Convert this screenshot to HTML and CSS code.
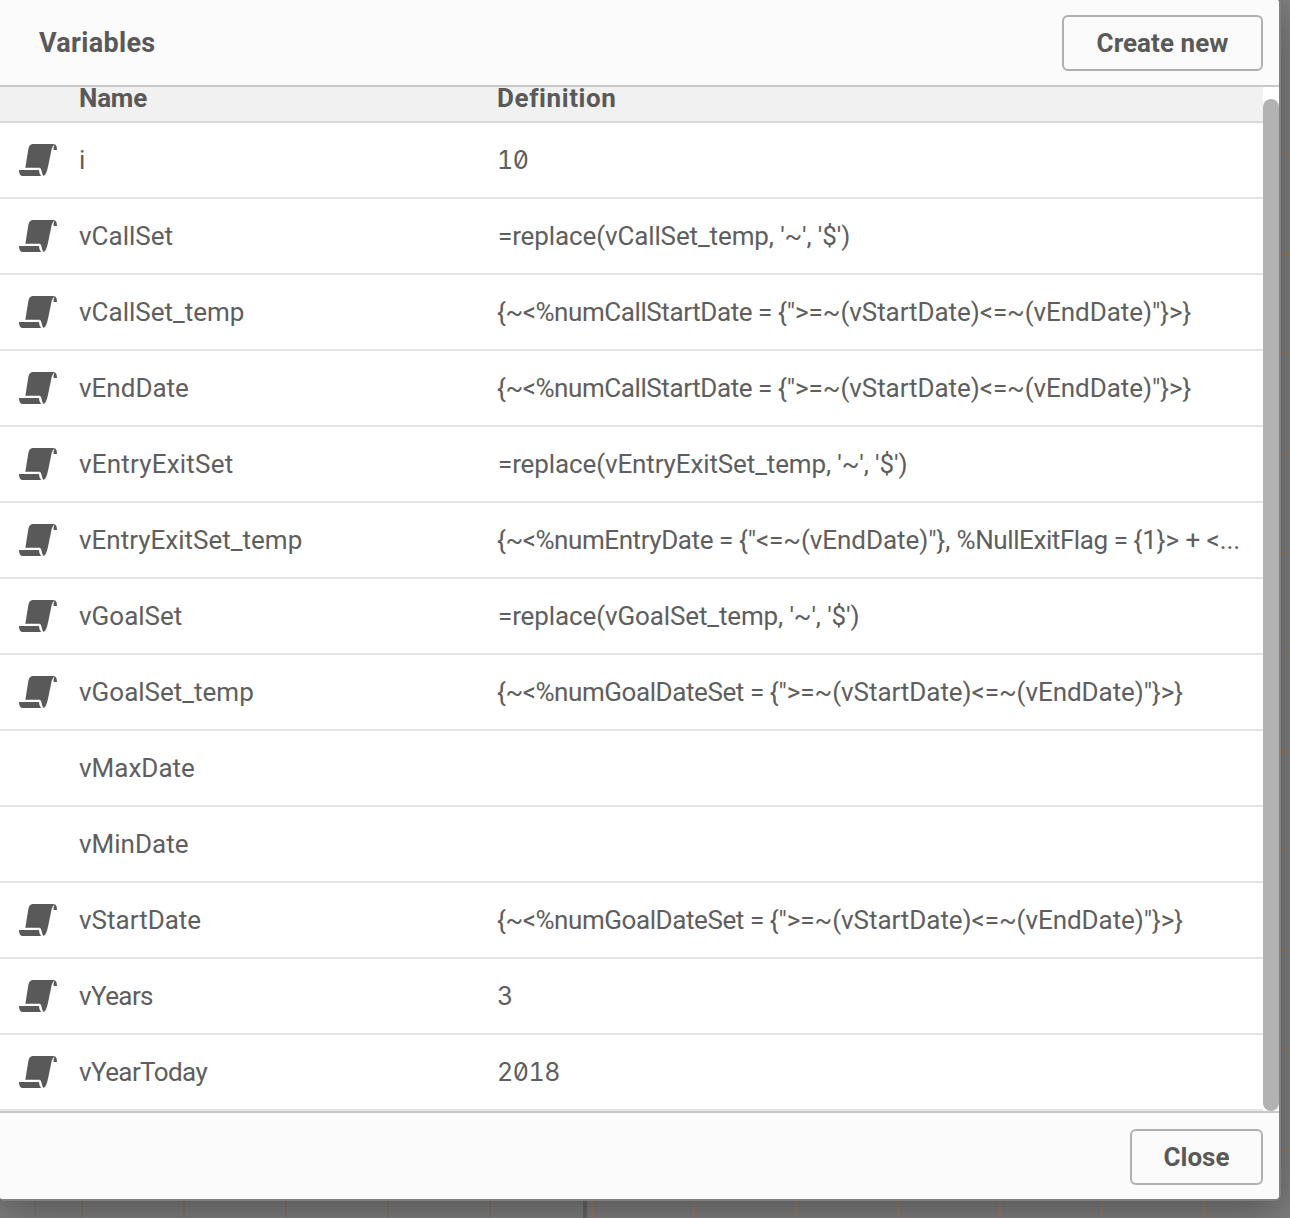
FILE: index.html
```
<!DOCTYPE html>
<html lang="en">
<head>
<meta charset="utf-8">
<title>Variables</title>
<link rel="stylesheet" href="styles.css">
</head>
<body>
<svg class="defs" aria-hidden="true"><symbol id="script" viewBox="0 0 114 96"><path d="M40 0C32 2 29 8 28 16L19 71H62C69 73 67 88 74 96C85 92 88 60 95 30C98 12 101 5 107 2L103 0Z"/><path d="M104 0C111 -1 114 8 114 18H104C103 10 105 6 107 2Z"/><path d="M0 78H60C61 88 63 93 67 96H12C3 96 0 88 0 78Z"/></symbol></svg>
<main class="dialog">
<header class="dialog-header"><h1 class="title">Variables</h1><button class="button create">Create new</button></header>
<section class="content">
<div class="table">
<div class="row head"><span class="name">Name</span><span class="definition">Definition</span></div>
<div class="row"><svg class="icon"><use href="#script"/></svg><span class="name">i</span><span class="definition number">10</span></div>
<div class="row"><svg class="icon"><use href="#script"/></svg><span class="name">vCallSet</span><span class="definition formula">=replace(vCallSet_temp, '~', '$')</span></div>
<div class="row"><svg class="icon"><use href="#script"/></svg><span class="name">vCallSet_temp</span><span class="definition"><span class="field">{~&lt;%numCallStartDate = </span>{"&gt;=~(vStartDate)&lt;=~(vEndDate)"}&gt;}</span></div>
<div class="row"><svg class="icon"><use href="#script"/></svg><span class="name">vEndDate</span><span class="definition"><span class="field">{~&lt;%numCallStartDate = </span>{"&gt;=~(vStartDate)&lt;=~(vEndDate)"}&gt;}</span></div>
<div class="row"><svg class="icon"><use href="#script"/></svg><span class="name loose">vEntryExitSet</span><span class="definition formula">=replace(vEntryExitSet_temp, '~', '$')</span></div>
<div class="row"><svg class="icon"><use href="#script"/></svg><span class="name">vEntryExitSet_temp</span><span class="definition"><span class="field">{~&lt;%numEntryDate = </span>{"&lt;=~(vEndDate)"}, <span class="field">%NullExitFlag = </span>{1}&gt; + &lt;...</span></div>
<div class="row"><svg class="icon"><use href="#script"/></svg><span class="name">vGoalSet</span><span class="definition formula">=replace(vGoalSet_temp, '~', '$')</span></div>
<div class="row"><svg class="icon"><use href="#script"/></svg><span class="name">vGoalSet_temp</span><span class="definition"><span class="field">{~&lt;%numGoalDateSet = </span>{"&gt;=~(vStartDate)&lt;=~(vEndDate)"}&gt;}</span></div>
<div class="row"><span class="name">vMaxDate</span><span class="definition"></span></div>
<div class="row"><span class="name">vMinDate</span><span class="definition"></span></div>
<div class="row"><svg class="icon"><use href="#script"/></svg><span class="name">vStartDate</span><span class="definition"><span class="field">{~&lt;%numGoalDateSet = </span>{"&gt;=~(vStartDate)&lt;=~(vEndDate)"}&gt;}</span></div>
<div class="row"><svg class="icon"><use href="#script"/></svg><span class="name tight">vYears</span><span class="definition number">3</span></div>
<div class="row"><svg class="icon"><use href="#script"/></svg><span class="name tight">vYearToday</span><span class="definition number">2018</span></div>
</div>
<div class="scrollbar"><div class="thumb"></div></div>
</section>
<footer class="dialog-footer"><button class="button close">Close</button></footer>
</main>
</body>
</html>
```
FILE: styles.css
```
* { box-sizing: border-box; }
body {
  margin: 0;
  width: 1290px;
  height: 1218px;
  overflow: hidden;
  color: #5e5e5e;
  font: 400 26px/30px Roboto, "Liberation Sans", sans-serif;
  background:
    linear-gradient(#666, #666) 583px 0 / 4px 100% no-repeat,
    linear-gradient(#777, #777) 35px 0 / 1px 100% no-repeat,
    repeating-linear-gradient(90deg, #9a7c62 0 2px, transparent 2px 102px) 591px 0 / 614px 100% no-repeat,
    repeating-linear-gradient(90deg, #86766a 0 2px, transparent 2px 102px) 81px 0 / 502px 100% no-repeat,
    repeating-linear-gradient(180deg, #957a64 0 2px, transparent 2px 99.5px) 0 154px / 100% 998px no-repeat,
    #7f7f7f;
}
.defs { position: absolute; width: 0; height: 0; }
.dialog {
  display: flex;
  flex-direction: column;
  width: 1281px;
  height: 1201px;
  overflow: hidden;
  border: solid #808080;
  border-width: 0 2px 2px 0;
  border-radius: 0 4px 6px 4px;
  background: #fff;
  box-shadow: 0 10px 40px rgba(0, 0, 0, .35);
}
.dialog-header {
  display: flex;
  flex: 0 0 87px;
  align-items: center;
  justify-content: space-between;
  padding: 0 16px 0 39px;
  border-bottom: 2px solid #c8c8c8;
  background: #fbfbfb;
}
.title { margin: 0; color: #595959; font-size: 27px; font-weight: 700; letter-spacing: .3px; }
.button {
  height: 56px;
  padding: 0;
  border: 2px solid #b0b0b0;
  border-radius: 6px;
  background: #fbfbfb;
  color: #595959;
  font: 700 26px/50px Roboto, "Liberation Sans", sans-serif;
}
.create { width: 201px; letter-spacing: .05px; }
.close { width: 133px; }
.content { display: flex; flex: 0 0 1024px; overflow: hidden; }
.table { width: 1263px; }
.row {
  display: grid;
  grid-template-columns: 38px 404px 1fr;
  align-items: center;
  height: 76px;
  padding: 0 0 1px 19px;
  border-bottom: 2px solid #e4e4e4;
  white-space: nowrap;
}
.head {
  align-items: start;
  height: 36px;
  padding-bottom: 0;
  border-color: #d8d8d8;
  background: #f1f1f1;
  color: #595959;
  font-weight: 700;
  line-height: 22px;
}
.head .name { letter-spacing: -.2px; }
.head .definition { letter-spacing: .6px; }
.icon { width: 38px; height: 32px; fill: #595959; }
.name { grid-column: 2; padding-left: 22px; }
.tight { letter-spacing: -.6px; }
.loose { letter-spacing: .2px; }
.definition { grid-column: 3; padding-left: 36px; letter-spacing: -.06px; }
.formula { padding-left: 37px; letter-spacing: -.12px; }
.field { letter-spacing: -.42px; }
.number {
  font-family: Inter, Roboto, sans-serif;
  font-size: 25px;
  font-feature-settings: "zero", "tnum";
  letter-spacing: -.5px;
}
.scrollbar { width: 16px; padding-top: 12px; }
.thumb { height: 1012px; border-radius: 8px; background: #b2b2b2; }
.dialog-footer {
  display: flex;
  flex: 1;
  align-items: center;
  justify-content: flex-end;
  padding: 2px 16px 0 0;
  border-top: 2px solid #c8c8c8;
  background: #fbfbfb;
}
```
